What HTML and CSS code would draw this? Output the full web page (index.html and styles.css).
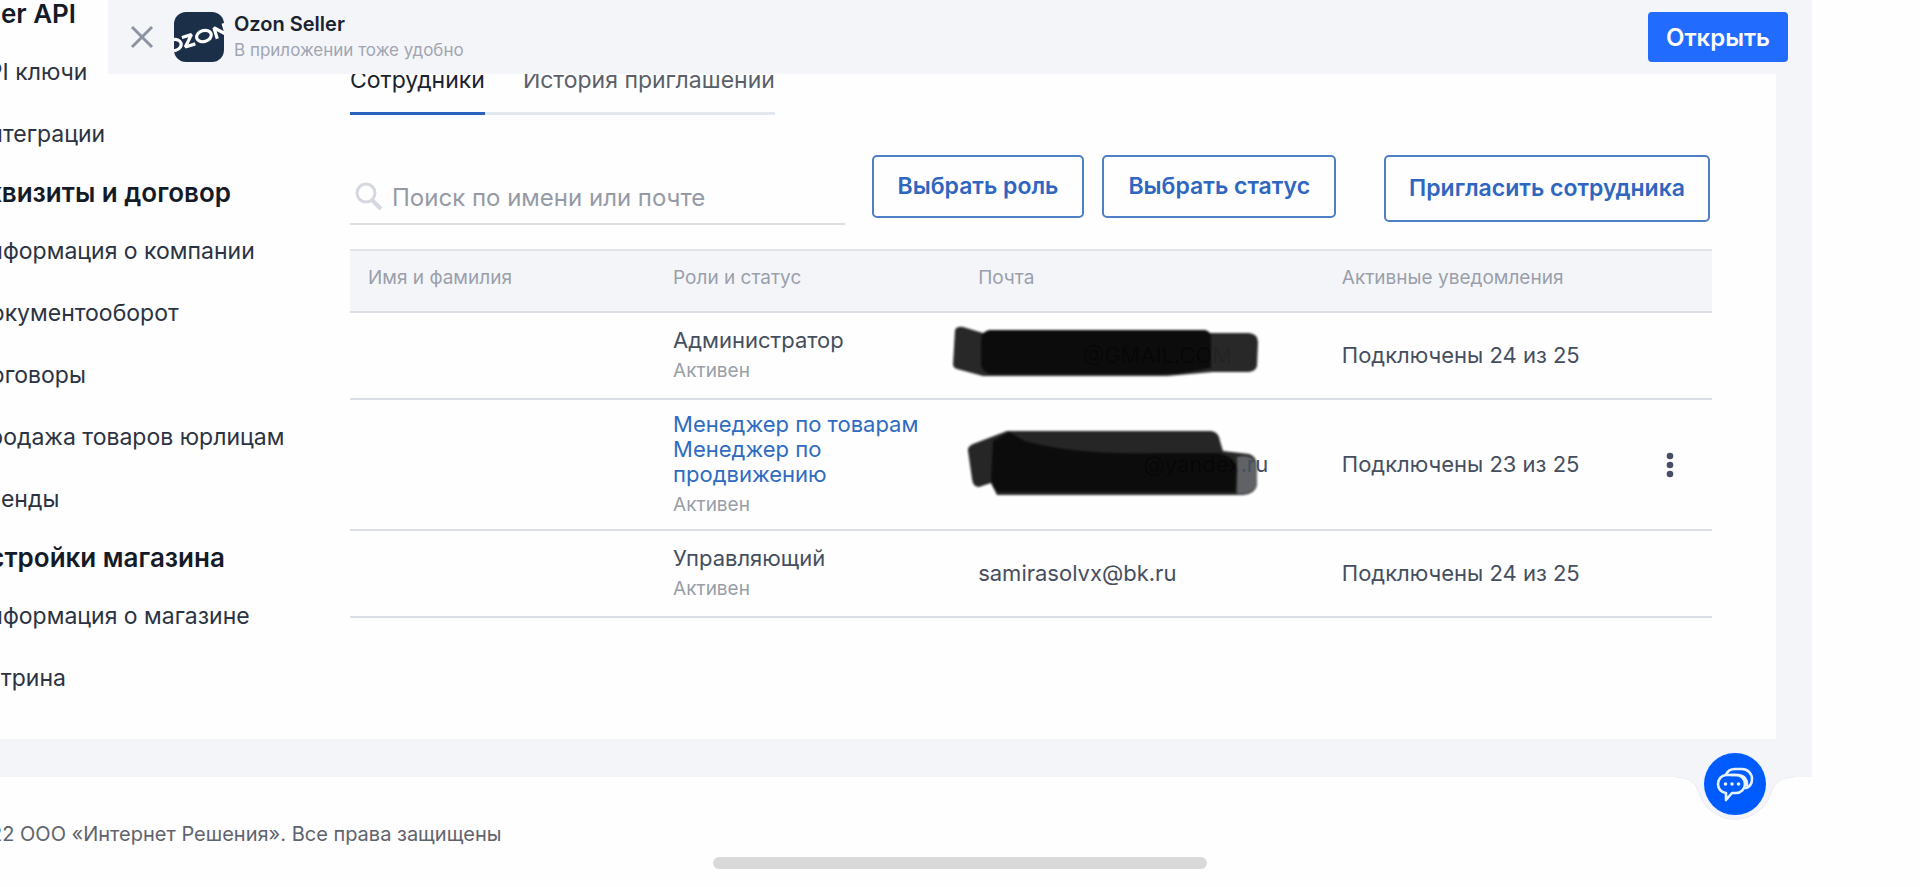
FILE: index.html
```html
<!DOCTYPE html>
<html lang="ru">
<head>
<meta charset="utf-8">
<meta name="viewport" content="width=device-width, initial-scale=1">
<title>Ozon Seller — Сотрудники</title>
<link rel="stylesheet" href="styles.css">
</head>
<body>
<header class="banner">
  <button class="banner-close" type="button" aria-label="Закрыть">
    <svg width="24" height="24" viewBox="0 0 24 24"><path d="M2 2 22 22M22 2 2 22" fill="none" stroke="#8d93a1" stroke-width="3"/></svg>
  </button>
  <svg class="banner-logo" width="50" height="50" viewBox="0 0 50 50" aria-hidden="true">
    <defs><clipPath id="logo-clip"><rect width="50" height="50" rx="12"/></clipPath></defs>
    <g clip-path="url(#logo-clip)">
      <rect width="50" height="50" fill="#1c2f49"/>
      <g fill="none" stroke="#fff" stroke-width="3.2" stroke-linejoin="bevel" transform="rotate(-17 25 25)">
        <ellipse cx="-1" cy="25.500" rx="7" ry="5.500"/>
        <path d="M8.500 20.500H18.500L9 30.500H19.500"/>
        <ellipse cx="30" cy="25.500" rx="7.500" ry="5.500"/>
        <path d="M42 32V20.500L52 30.500V19"/>
      </g>
    </g>
  </svg>
  <div class="banner-text">
    <strong class="banner-title">Ozon Seller</strong>
    <span class="banner-note">В приложении тоже удобно</span>
  </div>
  <button class="banner-open" type="button">Открыть</button>
</header>

<div class="page">
  <div class="panel">
    <nav class="sidebar">
      <h2 class="side-heading">Seller API</h2>
      <a class="side-link" href="#">API ключи</a>
      <a class="side-link" href="#">Интеграции</a>
      <h2 class="side-heading">Реквизиты и договор</h2>
      <a class="side-link" href="#">Информация о компании</a>
      <a class="side-link" href="#">Документооборот</a>
      <a class="side-link" href="#">Договоры</a>
      <a class="side-link" href="#">Продажа товаров юрлицам</a>
      <a class="side-link" href="#">Бренды</a>
      <h2 class="side-heading">Настройки магазина</h2>
      <a class="side-link" href="#">Информация о магазине</a>
      <a class="side-link" href="#">Витрина</a>
    </nav>
    <main class="content">
      <div class="tabs">
        <a class="tab tab-active" href="#">Сотрудники</a>
        <a class="tab" href="#">История приглашений</a>
      </div>
      <div class="toolbar">
        <label class="search">
          <svg width="30" height="30" viewBox="0 0 30 30" aria-hidden="true"><circle cx="12" cy="11" r="9" fill="none" stroke="#d5d8e0" stroke-width="3"/><path d="M18 18 27 27" stroke="#d5d8e0" stroke-width="4"/></svg>
          <input class="search-input" type="text" placeholder="Поиск по имени или почте" aria-label="Поиск по имени или почте">
        </label>
        <button class="button" type="button">Выбрать роль</button>
        <button class="button" type="button">Выбрать статус</button>
        <button class="button button-invite" type="button">Пригласить сотрудника</button>
      </div>
      <table class="staff">
        <colgroup><col class="col-name"><col class="col-role"><col class="col-mail"><col class="col-notice"><col class="col-menu"></colgroup>
        <thead>
          <tr><th>Имя и фамилия</th><th>Роли и статус</th><th>Почта</th><th>Активные уведомления</th><th></th></tr>
        </thead>
        <tbody>
          <tr class="row-short">
            <td></td>
            <td>Администратор<span class="status">Активен</span></td>
            <td><div class="masked masked-upper">@GMAIL.COM
              <svg class="scribble scribble-first" width="308" height="52" viewBox="0 0 308 52" aria-hidden="true">
                <g class="soft">
                  <path d="M4 6Q6 2 12 3L32 9H298Q307 10 307 18L306 42Q305 47 298 48H262L216 52H32L6 45Q2 44 2 40Z" fill="#222"/>
                  <path d="M38 6H254Q260 7 260 14V44L226 50H38Q30 46 30 40V16Q30 8 38 6Z" fill="#050505"/>
                </g>
              </svg></div></td>
            <td>Подключены 24 из 25</td>
            <td></td>
          </tr>
          <tr>
            <td></td>
            <td><a class="role-link" href="#">Менеджер по товарам</a><a class="role-link" href="#">Менеджер по продвижению</a><span class="status">Активен</span></td>
            <td><div class="masked masked-lower">@yandex
              <svg class="scribble scribble-second" width="296" height="68" viewBox="0 0 296 68" aria-hidden="true">
                <g class="soft">
                  <path d="M3 22Q2 18 8 15L42 2H246Q254 3 255 12L258 22 284 25Q291 27 292 36V56Q290 65 278 66H32L26 54 14 58Q8 58 7 50Z" fill="#202020"/>
                  <path d="M28 12 44 3 60 12Q110 26 190 24L254 24Q272 28 272 42L270 63H34Q26 60 26 48Z" fill="#050505"/>
                  <path d="M272 28Q290 24 292 38V56Q288 66 272 65Z" fill="#5b5d62"/>
                </g>
              </svg><span class="mask-tail">.ru</span></div></td>
            <td>Подключены 23 из 25</td>
            <td class="menu-cell"><button class="menu" type="button" aria-label="Действия"><svg width="8" height="26" viewBox="0 0 8 26" fill="#454e63"><circle cx="4" cy="4" r="3.300"/><circle cx="4" cy="13" r="3.300"/><circle cx="4" cy="22" r="3.300"/></svg></button></td>
          </tr>
          <tr class="row-short">
            <td></td>
            <td>Управляющий<span class="status">Активен</span></td>
            <td>samirasolvx@bk.ru</td>
            <td>Подключены 24 из 25</td>
            <td></td>
          </tr>
        </tbody>
      </table>
    </main>
  </div>
</div>
<footer class="footer"><p class="copyright">© 1998–2022 ООО «Интернет Решения». Все права защищены</p></footer>

<button class="chat" type="button" aria-label="Чат поддержки">
  <svg width="128" height="80" viewBox="0 0 128 80">
    <path d="M4 35Q22 35 27 48A38 38 0 0 0 101 48Q106 35 124 35Z" fill="#f4f5f9"/>
    <path d="M4 35Q22 35 27 48A38 38 0 0 0 101 48Q106 35 124 35" fill="none" stroke="#e9ecf3"/>
    <circle cx="64" cy="42" r="32" fill="#e9f3ff"/>
    <circle cx="64" cy="42" r="31" fill="#005bff"/>
    <g fill="none" stroke="#e8f3ff" stroke-width="2.600" stroke-linecap="round" stroke-linejoin="round">
      <path d="M55 33H65A9 9 0 0 1 74 42A9 9 0 0 1 65 51H61L55 58V51A9 9 0 0 1 47 42A9 9 0 0 1 55 33Q57 27 64 27H71A10 10 0 0 1 81 37Q81 44 75 46"/>
      <path d="M60 33H68Q76 34 76 43" />
    </g>
    <g fill="#e8f3ff"><circle cx="54.500" cy="42" r="1.800"/><circle cx="61" cy="42" r="1.800"/><circle cx="67.500" cy="42" r="1.800"/></g>
  </svg>
</button>
<div class="home-indicator"></div>
</body>
</html>
```
FILE: styles.css
```css
* { box-sizing: border-box; }

body {
  margin: 0;
  min-height: 100vh;
  background: #fefefe;
  color: #454e5f;
  font: 22px/25px Inter, "Liberation Sans", sans-serif;
  overflow: hidden;
}

button { font: inherit; cursor: pointer; }
a { text-decoration: none; color: inherit; }

.banner {
  position: fixed;
  z-index: 2;
  top: 0;
  left: 108px;
  right: 108px;
  display: flex;
  align-items: center;
  height: 74px;
  padding: 0 24px 0 22px;
  background: #f4f5f9;
}
.banner-close { display: flex; padding: 0; border: 0; background: none; }
.banner-logo { margin-left: 20px; }
.banner-text { display: flex; flex-direction: column; flex: 1; margin-left: 10px; line-height: 26px; }
.banner-title { color: #1a2230; font-size: 20px; font-weight: 600; }
.banner-note { color: #a0a5b1; font-size: 17px; }
.banner-open {
  height: 50px;
  padding: 0 18px;
  border: 0;
  border-radius: 4px;
  background: #226bff;
  color: #fff;
  font-size: 24px;
  font-weight: 600;
}

.page { margin-right: 108px; padding: 0 36px 38px 0; background: #f4f5f9; }
.panel { display: flex; min-height: 739px; background: #fefefe; }

.sidebar {
  display: flex;
  flex-direction: column;
  flex: 0 0 350px;
  margin-top: -14px;
}
.side-heading, .side-link { margin: 0 0 0 -28px; white-space: nowrap; color: #2b3342; }
.side-heading { margin-left: -45px; color: #141b27; font-size: 26px; font-weight: 600; line-height: 55px; }
.side-link { font-size: 23px; line-height: 62px; }

.content { flex: 1; min-width: 0; padding: 64px 64px 0 0; }

.tabs { display: flex; width: max-content; gap: 38px; border-bottom: 3px solid #e3e7ee; }
.tab { height: 48px; margin-bottom: -3px; padding-top: 4px; font-size: 23px; color: #5a6069; }
.tab-active { height: 51px; color: #1a2230; border-bottom: 3px solid #2a62bd; }

.toolbar { display: flex; align-items: flex-start; margin-top: 40px; padding-right: 2px; }
.search {
  display: flex;
  align-items: center;
  flex: 1;
  min-width: 0;
  height: 54px;
  margin: 16px 27px 0 0;
  padding-left: 4px;
  gap: 8px;
  border-bottom: 2px solid #dcdee2;
}
.search-input {
  flex: 1;
  min-width: 0;
  padding: 2px 0 0;
  border: 0;
  outline: 0;
  background: none;
  color: #454e5f;
  font: 24px/32px Inter, "Liberation Sans", sans-serif;
}
.search-input::placeholder { color: #959aa6; opacity: 1; }
.button {
  height: 63px;
  margin-right: 18px;
  padding: 0 24px;
  border: 2px solid #4f7fc4;
  border-radius: 5px;
  background: none;
  color: #2f66bf;
  font-size: 23px;
  font-weight: 600;
  white-space: nowrap;
}
.button-invite { height: 67px; margin: 0 0 0 30px; padding: 0 23px; }

.staff { width: 100%; margin-top: 24px; border-collapse: collapse; table-layout: fixed; }
.col-name, .col-role { width: 22.400%; }
.col-mail { width: 26.700%; }
.col-notice { width: 22.300%; }
.staff th {
  height: 62px;
  padding: 0 18px 8px;
  border-top: 2px solid #e0e3ea;
  background: #f4f5f9;
  color: #9a9fab;
  font-size: 19px;
  font-weight: 400;
  text-align: left;
}
.staff tr { border-bottom: 2px solid #dcdee5; }
.staff td { height: 131px; padding: 0 18px; }
.staff .row-short td { height: 87px; }
.role-link { display: block; color: #2f6bc0; }
.status { display: block; margin-top: 5px; color: #999ea8; font-size: 19px; }
.menu-cell { text-align: center; }
.menu { padding: 0; border: 0; background: none; vertical-align: middle; }
.menu svg { display: block; }

.masked { position: relative; display: flex; justify-content: flex-end; }
.masked-upper { width: 254px; }
.masked-lower { width: 290px; padding-right: 28px; }
.scribble { position: absolute; overflow: visible; }
.scribble-first { left: -27px; top: -19px; }
.scribble-second { left: -13px; top: -23px; }
.soft { filter: blur(1px); opacity: 0.970; }
.mask-tail { position: absolute; right: 0; top: 0; }

.footer { height: 110px; padding-top: 42px; color: #5f646c; font-size: 20px; line-height: 30px; }
.copyright { margin: 0 0 0 -114px; white-space: nowrap; }

.chat { position: fixed; z-index: 1; right: 121px; top: 742px; display: flex; padding: 0; border: 0; background: none; }
.home-indicator {
  position: fixed;
  left: 50%;
  bottom: 18px;
  width: 494px;
  height: 12px;
  margin-left: -247px;
  border-radius: 6px;
  background: #d9d9d9;
}
```
